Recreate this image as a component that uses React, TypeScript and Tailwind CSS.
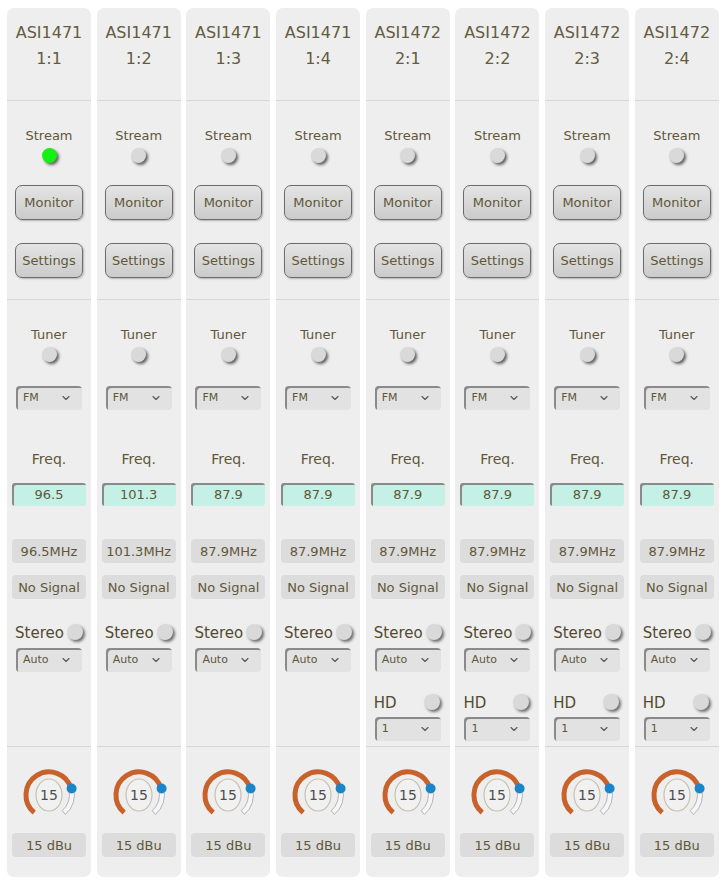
import { ChevronDown } from 'lucide-react';
import clsx from 'clsx';

interface Channel {
  card: string;
  port: string;
  streaming: boolean;
  freq: string;
  hd: boolean;
}

const channels: Channel[] = [
  { card: 'ASI1471', port: '1:1', streaming: true, freq: '96.5', hd: false },
  { card: 'ASI1471', port: '1:2', streaming: false, freq: '101.3', hd: false },
  { card: 'ASI1471', port: '1:3', streaming: false, freq: '87.9', hd: false },
  { card: 'ASI1471', port: '1:4', streaming: false, freq: '87.9', hd: false },
  { card: 'ASI1472', port: '2:1', streaming: false, freq: '87.9', hd: true },
  { card: 'ASI1472', port: '2:2', streaming: false, freq: '87.9', hd: true },
  { card: 'ASI1472', port: '2:3', streaming: false, freq: '87.9', hd: true },
  { card: 'ASI1472', port: '2:4', streaming: false, freq: '87.9', hd: true },
];

function Led({ on }: { on?: boolean }) {
  return (
    <div
      className={clsx(
        'h-[15px] w-[15px] rounded-full shadow-[2px_2px_3px_rgba(0,0,0,0.6)]',
        on ? 'bg-[#14f014]' : 'bg-[#d9d9d9]'
      )}
    />
  );
}

function Button({ label, className }: { label: string; className?: string }) {
  return (
    <div
      className={clsx(
        'flex h-[35px] w-[68px] items-center justify-center rounded-[7px] border border-[#6c6c6c] bg-gradient-to-b from-[#e4e4e4] to-[#cbcbcb] pt-[1px] text-[13px] text-[#5f5739] shadow-[1px_1px_2px_rgba(0,0,0,0.25)]',
        className
      )}
    >
      {label}
    </div>
  );
}

function Select({ value, className }: { value: string; className?: string }) {
  return (
    <div
      className={clsx(
        'flex h-[24px] w-[66px] items-center justify-between rounded-[4px] bg-[#e2e2e2] pl-[7px] pr-[10px] text-[11px] text-[#5f5739] shadow-[inset_2px_2px_0_#8a8a8a]',
        className
      )}
    >
      <span className="pt-[1px]">{value}</span>
      <ChevronDown size={12} strokeWidth={2.2} className="text-[#555]" />
    </div>
  );
}

function InfoBox({ children, className }: { children: React.ReactNode; className?: string }) {
  return (
    <div
      className={clsx(
        'flex h-[24px] w-[74px] items-center justify-center rounded-[4px] bg-[#dcdcdc] pt-[1px] text-[13px] text-[#5f5739]',
        className
      )}
    >
      {children}
    </div>
  );
}

function Toggle() {
  return <div className="h-[16px] w-[16px] rounded-full bg-[#d9d9d9] shadow-[2px_2px_3px_rgba(0,0,0,0.55)]" />;
}

function Knob({ value }: { value: number }) {
  return (
    <svg width="60" height="60" viewBox="0 0 60 60">
      <path
        d="M54.5 22.97 A25.5 25.5 0 0 1 46.4 49.5 L43.18 45.7 A20.5 20.5 0 0 0 49.7 24.35 Z"
        fill="#f6f6f6"
        stroke="#b5b5b5"
        strokeWidth="1"
      />
      <path
        d="M15.2 47.6 A23 23 0 1 1 52.1 23.7"
        fill="none"
        stroke="#c8612a"
        strokeWidth="5"
      />
      <ellipse cx="30" cy="30" rx="13" ry="16" fill="#f1f1f1" stroke="#c6c2ad" strokeWidth="1.2" />
      <text
        x="30"
        y="35"
        textAnchor="middle"
        fontSize="14"
        fill="#4f4f4f"
        fontFamily="'DejaVu Sans', sans-serif"
      >
        {value}
      </text>
      <circle cx="52.6" cy="23.5" r="5" fill="#1a86c8" />
    </svg>
  );
}

function Divider() {
  return <div className="h-px bg-[#d7d7d7]" />;
}

function Strip({ ch }: { ch: Channel }) {
  return (
    <div className="flex h-[869px] w-[84px] shrink-0 flex-col rounded-[7px] bg-[#eeeeee] text-[#5f5739]">
      <div className="flex h-[92px] flex-col items-center pt-[12px] text-[16px] leading-[26px] text-[#645b40]">
        <div>{ch.card}</div>
        <div>{ch.port}</div>
      </div>
      <Divider />
      <div className="flex h-[198px] flex-col items-center">
        <div className="mt-[27px] text-[13px] leading-[16px]">Stream</div>
        <div className="mt-[4px]">
          <Led on={ch.streaming} />
        </div>
        <Button label="Monitor" className="mt-[22px]" />
        <Button label="Settings" className="mt-[23px]" />
      </div>
      <Divider />
      <div className="flex h-[446px] flex-col items-center">
        <div className="mt-[27px] text-[13px] leading-[16px]">Tuner</div>
        <div className="mt-[4px]">
          <Led />
        </div>
        <Select value="FM" className="mt-[24px]" />
        <div className="mt-[40px] text-[14px] leading-[18px]">Freq.</div>
        <div className="mt-[15px] flex h-[23px] w-[74px] items-center justify-center rounded-[3px] bg-[#c4f0e5] pt-[1px] text-[13px] text-[#5f5739] shadow-[inset_2px_2px_0_#8a8a8a]">
          {ch.freq}
        </div>
        <InfoBox className="mt-[33px]">{ch.freq}MHz</InfoBox>
        <InfoBox className="mt-[12px]">No Signal</InfoBox>
        <div className="mt-[24px] flex h-[18px] w-full items-center justify-between pl-[8px] pr-[8px]">
          <span className="pt-[2px] text-[15px] leading-[18px] text-[#524a31]">Stereo</span>
          <Toggle />
        </div>
        <Select value="Auto" className="mt-[7px]" />
        {ch.hd && (
          <>
            <div className="mt-[21px] flex h-[18px] w-full items-center justify-between pl-[8px] pr-[10px]">
              <span className="pt-[2px] text-[15px] leading-[18px] text-[#524a31]">HD</span>
              <Toggle />
            </div>
            <Select value="1" className="mt-[6px]" />
          </>
        )}
      </div>
      <Divider />
      <div className="flex h-[130px] flex-col items-center">
        <div className="mt-[18px]">
          <Knob value={15} />
        </div>
        <InfoBox className="mt-[8px]">15 dBu</InfoBox>
      </div>
    </div>
  );
}

export default function App() {
  return (
    <div className="min-h-[887px] w-[726px] bg-white font-['DejaVu_Sans',sans-serif]">
      <div className="flex gap-[5.7px] pl-[7px] pt-[8px]">
        {channels.map((ch) => (
          <Strip key={ch.port} ch={ch} />
        ))}
      </div>
    </div>
  );
}
